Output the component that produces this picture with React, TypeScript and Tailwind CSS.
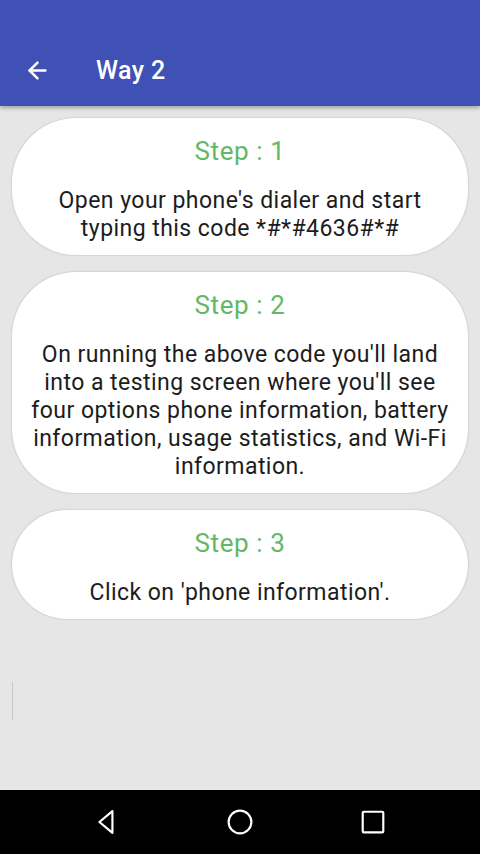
import { ArrowLeft } from "lucide-react";

const steps = [
  { n: 1, text: "Open your phone's dialer and start\ntyping this code *#*#4636#*#" },
  {
    n: 2,
    text: "On running the above code you'll land\ninto a testing screen where you'll see\nfour options phone information, battery\ninformation, usage statistics, and Wi-Fi\ninformation.",
  },
  { n: 3, text: "Click on 'phone information'." },
];

const StepCard = ({ n, text }: { n: number; text: string }) => (
  <div className="bg-white rounded-[64px] shadow-[0_0_2px_rgba(0,0,0,0.25)] px-[6px] pt-[17px] pb-[12px] flex flex-col items-center text-center">
    <p className="text-[26px] leading-[32px] tracking-[0.6px] text-[#62b866]">Step : {n}</p>
    <p className="mt-[20px] text-[23px] leading-[28px] tracking-[0.45px] text-[#1c1c1c] whitespace-pre-line">{text}</p>
  </div>
);

export default function App() {
  return (
    <div
      className="w-[480px] h-[854px] flex flex-col bg-[#e6e6e6] overflow-hidden"
      style={{ fontFamily: "Roboto, 'Noto Sans', sans-serif" }}
    >
      {/* toolbar */}
      <div className="h-[106px] bg-[#3f51b5] flex items-end pb-[17px] shadow-[0_2px_4px_rgba(0,0,0,0.3)] z-10">
        <div className="flex items-center">
          <ArrowLeft className="ml-[24px] w-[27px] h-[27px] text-white" strokeWidth={2.2} />
          <span className="ml-[45px] text-white text-[25px] tracking-[0.4px] font-medium">Way 2</span>
        </div>
      </div>

      <div className="flex-1 flex flex-col gap-[17px] px-[12px] pt-[12px] relative">
        {steps.map((s) => (
          <StepCard key={s.n} n={s.n} text={s.text} />
        ))}
        <div className="absolute left-[12px] top-[576px] w-px h-[38px] bg-[#c8c8c8]" />
      </div>

      {/* nav bar */}
      <div className="h-[64px] bg-black flex items-center justify-center gap-[107px]">
        <svg width="26" height="26" viewBox="0 0 24 24" fill="none" stroke="white" strokeWidth="2" strokeLinejoin="round">
          <path d="M17 2 L5 12 L17 22 Z" />
        </svg>
        <svg width="26" height="26" viewBox="0 0 24 24" fill="none" stroke="white" strokeWidth="2">
          <circle cx="12" cy="12" r="10.5" />
        </svg>
        <svg width="26" height="26" viewBox="0 0 24 24" fill="none" stroke="white" strokeWidth="2" strokeLinejoin="round">
          <rect x="2.5" y="2.5" width="19" height="19" rx="1" />
        </svg>
      </div>
    </div>
  );
}
